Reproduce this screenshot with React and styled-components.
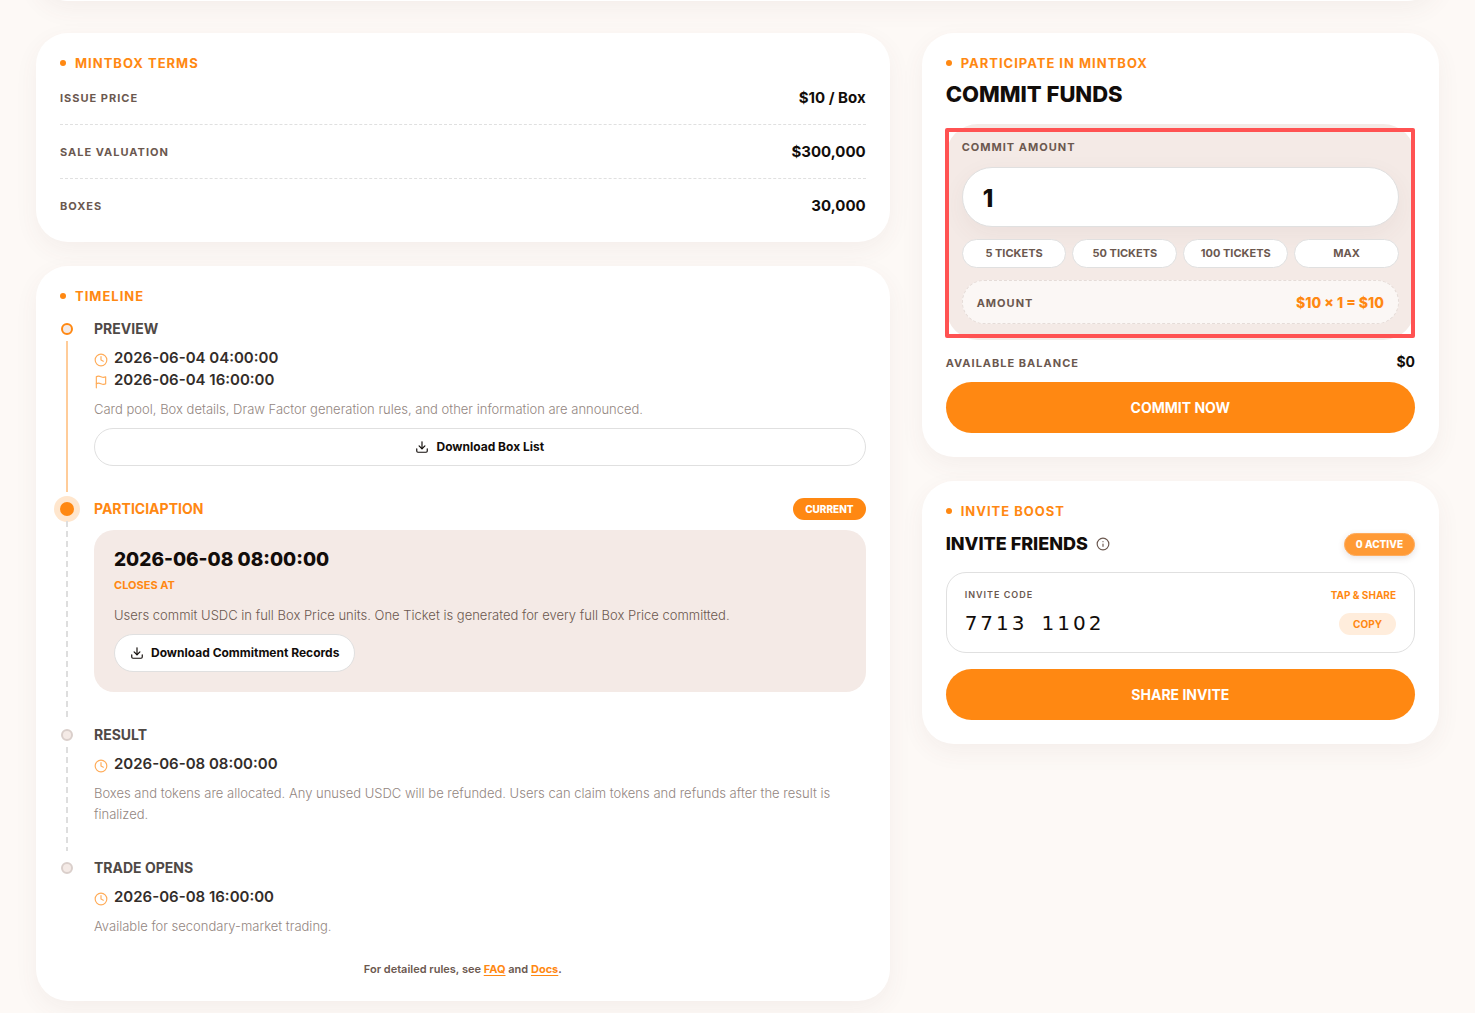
import { useState } from "react";
import styled, { createGlobalStyle, css } from "styled-components";
import { Clock, Download, Info } from "lucide-react";

const terms = [
  { label: "Issue price", value: "$10 / Box" },
  { label: "Sale valuation", value: "$300,000" },
  { label: "Boxes", value: "30,000" },
];

const presets = ["5 Tickets", "50 Tickets", "100 Tickets", "Max"];

const price = 10;

export default function App() {
  const [amount, setAmount] = useState("1");

  return (
    <>
      <GlobalStyle />
      <Hero />
      <Page>
        <Column>
          <Card>
            <Eyebrow $gap={2}>Mintbox terms</Eyebrow>
            <Terms>
              {terms.map((term) => (
                <Term key={term.label}>
                  <RowLabel as="dt">{term.label}</RowLabel>
                  <dd>{term.value}</dd>
                </Term>
              ))}
            </Terms>
          </Card>

          <Card>
            <Eyebrow $gap={16}>Timeline</Eyebrow>
            <Timeline>
              <Step title="Preview" state="done">
                <Times>
                  <Time icon={Clock}>2026-06-04 04:00:00</Time>
                  <Time icon={FlagIcon}>2026-06-04 16:00:00</Time>
                </Times>
                <Description>
                  Card pool, Box details, Draw Factor generation rules, and
                  other information are announced.
                </Description>
                <DownloadButton type="button" $wide>
                  <Download size={14} />
                  Download Box List
                </DownloadButton>
              </Step>

              <Step title="Particiaption" state="current">
                <CurrentPanel>
                  <CloseDate>2026-06-08 08:00:00</CloseDate>
                  <CloseLabel>Closes at</CloseLabel>
                  <Description $dark>
                    Users commit USDC in full Box Price units. One Ticket is
                    generated for every full Box Price committed.
                  </Description>
                  <DownloadButton type="button">
                    <Download size={14} />
                    Download Commitment Records
                  </DownloadButton>
                </CurrentPanel>
              </Step>

              <Step title="Result">
                <Times>
                  <Time icon={Clock}>2026-06-08 08:00:00</Time>
                </Times>
                <Description>
                  Boxes and tokens are allocated. Any unused USDC will be
                  refunded. Users can claim tokens and refunds after the result
                  is finalized.
                </Description>
              </Step>

              <Step title="Trade opens" last>
                <Times>
                  <Time icon={Clock}>2026-06-08 16:00:00</Time>
                </Times>
                <Description>Available for secondary-market trading.</Description>
              </Step>
            </Timeline>
            <Rules>
              For detailed rules, see <a href="#faq">FAQ</a> and{" "}
              <a href="#docs">Docs</a>.
            </Rules>
          </Card>
        </Column>

        <Column>
          <Card>
            <Eyebrow $gap={13}>Participate in Mintbox</Eyebrow>
            <Title>Commit funds</Title>
            <CommitPanel>
              <Label as="label" htmlFor="commit-amount">
                Commit amount
              </Label>
              <AmountInput
                id="commit-amount"
                inputMode="numeric"
                value={amount}
                onChange={(e) => setAmount(e.target.value)}
              />
              <Presets>
                {presets.map((preset) => (
                  <Preset
                    type="button"
                    key={preset}
                    onClick={() => setAmount(String(parseInt(preset) || 0))}
                  >
                    {preset}
                  </Preset>
                ))}
              </Presets>
              <Total>
                <RowLabel>Amount</RowLabel>
                <strong>
                  ${price} × {amount} = ${price * Number(amount)}
                </strong>
              </Total>
              <Highlight />
            </CommitPanel>
            <Balance>
              <RowLabel>Available balance</RowLabel>
              <strong>$0</strong>
            </Balance>
            <MainButton type="button">Commit now</MainButton>
          </Card>

          <Card>
            <Eyebrow $gap={15}>Invite boost</Eyebrow>
            <InviteHead>
              <InviteTitle>Invite friends</InviteTitle>
              <InfoButton type="button" aria-label="About invite boost">
                <Info size={14} />
              </InfoButton>
              <ActiveBadge>0 active</ActiveBadge>
            </InviteHead>
            <InviteBox>
              <div>
                <SmallLabel>Invite code</SmallLabel>
                <Code>
                  <span>7713</span> <span>1102</span>
                </Code>
              </div>
              <InviteSide>
                <SmallLabel $accent>Tap &amp; share</SmallLabel>
                <CopyButton type="button">Copy</CopyButton>
              </InviteSide>
            </InviteBox>
            <MainButton type="button">Share invite</MainButton>
          </Card>
        </Column>
      </Page>
    </>
  );
}

function Step({ title, state = "next", last, children }) {
  return (
    <StepItem $last={last}>
      <Rail>
        <DotSlot>
          <Dot $state={state} />
        </DotSlot>
        {!last && <Line $solid={state === "done"} />}
      </Rail>
      <StepBody>
        <StepHead $current={state === "current"}>
          <h3>{title}</h3>
          {state === "current" && <CurrentBadge>Current</CurrentBadge>}
        </StepHead>
        {children}
      </StepBody>
    </StepItem>
  );
}

function Time({ icon: Icon, children }) {
  return (
    <TimeRow>
      <Icon size={14} />
      <time>{children}</time>
    </TimeRow>
  );
}

function FlagIcon({ size }) {
  return (
    <svg
      width={size}
      height={size}
      viewBox="0 0 24 24"
      fill="none"
      stroke="currentColor"
      strokeWidth="2"
      strokeLinecap="round"
      strokeLinejoin="round"
      aria-hidden="true"
    >
      <path d="M4 15s1-1 4-1 5 2 8 2 4-1 4-1V3s-1 1-4 1-5-2-8-2-4 1-4 1z" />
      <path d="M4 22v-7" />
    </svg>
  );
}

const orange = "#ff8812";
const ink = "#120d0a";
const brown = "#6b584f";
const sand = "#f4eae6";
const line = "#e0e0e0";

const GlobalStyle = createGlobalStyle`
  * {
    box-sizing: border-box;
  }

  body {
    margin: 0;
    background: #fdf9f6;
    color: ${ink};
    font-family: Inter, "Liberation Sans", sans-serif;
  }

  h2, h3, p, dl, dd, ol {
    margin: 0;
    padding: 0;
  }

  button, input {
    font-family: inherit;
  }

  button {
    cursor: pointer;
  }
`;

const shadow = css`
  box-shadow: 0 8px 24px rgba(107, 70, 60, 0.06);
`;

// only the bottom edge of the hero card shows
const Hero = styled.div`
  height: 80px;
  margin: -79px 36px 0;
  border-radius: 32px;
  background: #fff;
  ${shadow}
`;

const Page = styled.main`
  display: grid;
  grid-template-columns: minmax(0, 33fr) minmax(0, 20fr);
  align-items: start;
  gap: 32px;
  padding: 32px 36px 12px;

  @media (max-width: 900px) {
    grid-template-columns: minmax(0, 1fr);
  }
`;

const Column = styled.div`
  display: flex;
  flex-direction: column;
  gap: 24px;
`;

const Card = styled.section`
  padding: 24px;
  border-radius: 32px;
  background: #fff;
  ${shadow}
`;

const Eyebrow = styled.p`
  display: flex;
  align-items: center;
  gap: 9px;
  margin-bottom: ${({ $gap }) => $gap}px;
  color: ${orange};
  font-size: 13px;
  font-weight: 700;
  line-height: 12px;
  letter-spacing: 1px;
  text-transform: uppercase;

  &::before {
    content: "";
    width: 6px;
    height: 6px;
    border-radius: 50%;
    background: ${orange};
  }
`;

const Label = styled.span`
  color: ${brown};
  font-size: 11px;
  font-weight: 700;
  line-height: 15px;
  letter-spacing: 1px;
  text-transform: uppercase;
`;

const RowLabel = styled(Label)`
  padding-top: 2px;
`;

const Terms = styled.dl`
  display: flex;
  flex-direction: column;
`;

const Term = styled.div`
  display: flex;
  align-items: center;
  justify-content: space-between;
  padding: 14px 0;
  border-bottom: 1px dashed ${line};

  &:last-child {
    padding-bottom: 0;
    border-bottom: 0;
  }

  dd {
    font-size: 15px;
    font-weight: 700;
    line-height: 25px;
  }
`;

const Timeline = styled.ol`
  list-style: none;
`;

const StepItem = styled.li`
  display: flex;
  gap: 20px;
  ${({ $last }) => !$last && "--step-space: 32px;"}
`;

const Rail = styled.div`
  display: flex;
  flex-direction: column;
  align-items: center;
  width: 14px;
  flex-shrink: 0;
`;

const DotSlot = styled.div`
  display: flex;
  align-items: center;
  height: 22px;
`;

const dots = {
  done: css`
    width: 12px;
    height: 12px;
    border: 2px solid ${orange};
    background: ${sand};
  `,
  current: css`
    width: 14px;
    height: 14px;
    background: ${orange};
    box-shadow: 0 0 0 6px #ffe6cd;
  `,
  next: css`
    width: 12px;
    height: 12px;
    border: 2px solid #dacfcb;
    background: ${sand};
  `,
};

const Dot = styled.span`
  border-radius: 50%;
  ${({ $state }) => dots[$state]}
`;

const Line = styled.span`
  flex: 1;
  width: 2px;
  margin: 1px 0 6px;
  background: ${({ $solid }) =>
    $solid
      ? "#ffcc99"
      : "repeating-linear-gradient(#dedede 0 6px, transparent 6px 10px)"};
`;

const StepBody = styled.div`
  flex: 1;
  min-width: 0;
  padding-bottom: var(--step-space, 0);
`;

const StepHead = styled.div`
  display: flex;
  align-items: center;
  justify-content: space-between;
  height: 22px;
  color: ${({ $current }) => ($current ? orange : "#4f4946")};

  h3 {
    font-size: 14px;
    font-weight: 700;
    line-height: 20px;
    text-transform: uppercase;
  }
`;

const CurrentBadge = styled.span`
  padding: 0 12px;
  border-radius: 11px;
  background: ${orange};
  color: #fff;
  font-size: 10px;
  font-weight: 800;
  line-height: 22px;
  text-transform: uppercase;
`;

const Times = styled.div`
  margin-top: 7px;
`;

const TimeRow = styled.div`
  display: flex;
  align-items: center;
  gap: 6px;
  color: #332d2a;
  font-size: 15px;
  font-weight: 600;
  line-height: 22px;

  svg {
    margin-top: 3px;
    color: #ffac59;
  }
`;

const Description = styled.p`
  margin: 8px 0;
  color: ${({ $dark }) => ($dark ? brown : "#93867f")};
  font-size: 13px;
  font-weight: 300;
  line-height: 21px;

  &:last-child {
    margin-bottom: 0;
  }
`;

const DownloadButton = styled.button`
  display: flex;
  align-items: center;
  justify-content: center;
  gap: 7px;
  width: ${({ $wide }) => ($wide ? "100%" : "auto")};
  height: 38px;
  padding: 0 15px 1px;
  border: 1px solid ${line};
  border-radius: 19px;
  background: #fff;
  color: ${ink};
  font-size: 12px;
  font-weight: 700;
`;

const CurrentPanel = styled.div`
  margin-top: 10px;
  padding: 20px;
  border-radius: 20px;
  background: ${sand};

  ${Description} {
    margin-top: 12px;
  }
`;

const CloseDate = styled.p`
  font-size: 19px;
  font-weight: 800;
  line-height: 20px;
`;

const CloseLabel = styled.p`
  margin-top: 8px;
  color: ${orange};
  font-size: 11px;
  font-weight: 700;
  line-height: 15px;
  text-transform: uppercase;
`;

const Rules = styled.p`
  margin-top: 24px;
  color: ${brown};
  font-size: 11px;
  font-weight: 600;
  line-height: 16px;
  text-align: center;

  a {
    color: ${orange};
    font-weight: 700;
    text-underline-offset: 2px;
  }
`;

const Title = styled.h2`
  font-size: 22px;
  font-weight: 800;
  line-height: 24px;
  text-transform: uppercase;
`;

const CommitPanel = styled.div`
  position: relative;
  display: flex;
  flex-direction: column;
  gap: 12px;
  margin-top: 18px;
  padding: 16px;
  border-radius: 32px;
  background: ${sand};
`;

const AmountInput = styled.input`
  width: 100%;
  height: 60px;
  padding: 2px 20px 0;
  border: 1px solid ${line};
  border-radius: 30px;
  background: #fff;
  color: ${ink};
  font-size: 24px;
  font-weight: 800;
  outline: none;
  ${shadow}
`;

const Presets = styled.div`
  display: grid;
  grid-template-columns: repeat(4, minmax(0, 1fr));
  gap: 6px;
`;

const Preset = styled.button`
  height: 29px;
  padding: 0 0 1px;
  border: 1px solid ${line};
  border-radius: 15px;
  background: #fff;
  color: ${brown};
  font-size: 11px;
  font-weight: 700;
  text-transform: uppercase;
`;

const Total = styled.div`
  display: flex;
  align-items: center;
  justify-content: space-between;
  height: 44px;
  padding: 0 14px;
  border: 1px dashed #e5dcd8;
  border-radius: 22px;
  background: #fbf7f5;

  strong {
    color: ${orange};
    font-size: 14px;
    font-weight: 800;
  }
`;

// red frame laid over the commit panel
const Highlight = styled.div`
  position: absolute;
  inset: 4px 0 2px -1px;
  border: 4px solid #ff5252;
  border-radius: 2px;
  pointer-events: none;
`;

const Balance = styled.div`
  display: flex;
  align-items: center;
  justify-content: space-between;
  margin: 12px 0 10px;
  line-height: 20px;

  strong {
    font-size: 14px;
    font-weight: 700;
  }
`;

const MainButton = styled.button`
  display: block;
  width: 100%;
  height: 51px;
  border: 0;
  border-radius: 26px;
  background: ${orange};
  color: #fff;
  font-size: 14px;
  font-weight: 700;
  text-transform: uppercase;
`;

const InviteHead = styled.div`
  display: flex;
  align-items: center;
  height: 24px;
`;

const InviteTitle = styled.h2`
  font-size: 18px;
  font-weight: 800;
  line-height: 22px;
  text-transform: uppercase;
`;

const InfoButton = styled.button`
  display: flex;
  margin-left: 8px;
  padding: 0;
  border: 0;
  border-radius: 50%;
  background: none;
  color: ${brown};
`;

const ActiveBadge = styled.span`
  margin-left: auto;
  padding: 0 11px;
  border: 1px solid #ffab5c;
  border-radius: 12px;
  background: #ff9a36;
  box-shadow: 0 2px 6px rgba(107, 70, 60, 0.16);
  color: #fff;
  font-size: 10px;
  font-weight: 800;
  line-height: 21px;
  text-transform: uppercase;
`;

const InviteBox = styled.div`
  display: flex;
  justify-content: space-between;
  height: 81px;
  margin: 16px 0;
  padding: 14px 18px;
  border: 1px solid ${line};
  border-radius: 20px;
`;

const SmallLabel = styled.p`
  color: ${({ $accent }) => ($accent ? orange : brown)};
  font-size: ${({ $accent }) => ($accent ? 10 : 9)}px;
  font-weight: ${({ $accent }) => ($accent ? 700 : 600)};
  line-height: 16px;
  letter-spacing: ${({ $accent }) => ($accent ? 0 : 1)}px;
  text-transform: uppercase;
`;

const Code = styled.p`
  display: flex;
  gap: 14px;
  margin-top: 8px;
  font-family: "DejaVu Sans", sans-serif;
  font-size: 20px;
  line-height: 24px;
  letter-spacing: 3px;
`;

const InviteSide = styled.div`
  display: flex;
  flex-direction: column;
  align-items: flex-end;
  gap: 10px;
`;

const CopyButton = styled.button`
  height: 22px;
  padding: 0 14px;
  border: 0;
  border-radius: 11px;
  background: #ffeddc;
  color: ${orange};
  font-size: 10px;
  font-weight: 700;
  text-transform: uppercase;
`;
